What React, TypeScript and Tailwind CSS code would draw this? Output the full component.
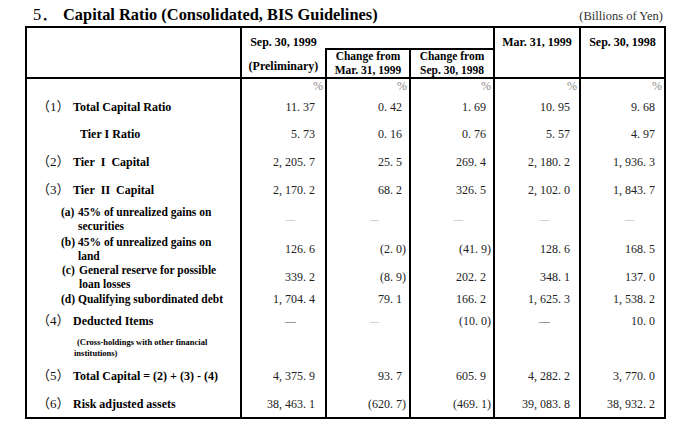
import React from "react";

type Val = { t: string; k: "num" | "paren" | "dash" | "dashDark" | "none" };

const n = (t: string): Val => ({ t, k: t.startsWith("(") ? "paren" : "num" });
const D: Val = { t: "—", k: "dash" };
const DD: Val = { t: "—", k: "dashDark" };

const colW = ["w-[85px]", "w-[84px]", "w-[84px]", "w-[86px]", "w-[85px]"];
const numPad = ["pr-[10px]", "pr-[7px]", "pr-[7px]", "pr-[9px]", "pr-[9px]"];
const parenPad = ["pr-[4px]", "pr-[3px]", "pr-[2px]", "pr-[4px]", "pr-[4px]"];

type Row = {
  h: string;
  prefix?: string;
  prefixKind?: "cjk" | "small";
  pl: string;
  lines: string[];
  vals: Val[];
  small?: boolean;
};

const rows: Row[] = [
  {
    h: "h-[27px]",
    prefix: "（1）",
    prefixKind: "cjk",
    pl: "pl-[10px]",
    lines: ["Total Capital Ratio"],
    vals: ["11. 37", "0. 42", "1. 69", "10. 95", "9. 68"].map(n),
  },
  {
    h: "h-[28px]",
    pl: "pl-[53px]",
    lines: ["Tier I Ratio"],
    vals: ["5. 73", "0. 16", "0. 76", "5. 57", "4. 97"].map(n),
  },
  {
    h: "h-[28px]",
    prefix: "（2）",
    prefixKind: "cjk",
    pl: "pl-[10px]",
    lines: ["Tier\u00a0\u00a0I\u00a0\u00a0Capital"],
    vals: ["2, 205. 7", "25. 5", "269. 4", "2, 180. 2", "1, 936. 3"].map(n),
  },
  {
    h: "h-[28px]",
    prefix: "（3）",
    prefixKind: "cjk",
    pl: "pl-[10px]",
    lines: ["Tier\u00a0\u00a0II\u00a0\u00a0Capital"],
    vals: ["2, 170. 2", "68. 2", "326. 5", "2, 102. 0", "1, 843. 7"].map(n),
  },
  {
    h: "h-[30px]",
    prefix: "(a)",
    prefixKind: "small",
    pl: "pl-[34px]",
    lines: ["45% of unrealized gains on", "securities"],
    vals: [D, D, D, D, D],
  },
  {
    h: "h-[29px]",
    prefix: "(b)",
    prefixKind: "small",
    pl: "pl-[34px]",
    lines: ["45% of unrealized gains on", "land"],
    vals: ["126. 6", "(2. 0)", "(41. 9)", "128. 6", "168. 5"].map(n),
  },
  {
    h: "h-[28px]",
    prefix: "(c)",
    prefixKind: "small",
    pl: "pl-[35px]",
    lines: ["General reserve for possible", "loan losses"],
    vals: ["339. 2", "(8. 9)", "202. 2", "348. 1", "137. 0"].map(n),
  },
  {
    h: "h-[16px]",
    prefix: "(d)",
    prefixKind: "small",
    pl: "pl-[34px]",
    lines: ["Qualifying subordinated debt"],
    vals: ["1, 704. 4", "79. 1", "166. 2", "1, 625. 3", "1, 538. 2"].map(n),
  },
  {
    h: "h-[28px]",
    prefix: "（4）",
    prefixKind: "cjk",
    pl: "pl-[10px]",
    lines: ["Deducted Items"],
    vals: [DD, D, n("(10. 0)"), DD, n("10. 0")],
  },
  {
    h: "h-[26px]",
    pl: "pl-[47px]",
    lines: ["(Cross-holdings with other financial", "institutions)"],
    small: true,
    vals: [
      { t: "", k: "none" },
      { t: "", k: "none" },
      { t: "", k: "none" },
      { t: "", k: "none" },
      { t: "", k: "none" },
    ],
  },
  {
    h: "h-[29px]",
    prefix: "（5）",
    prefixKind: "cjk",
    pl: "pl-[10px]",
    lines: ["Total Capital = (2) + (3) - (4)"],
    vals: ["4, 375. 9", "93. 7", "605. 9", "4, 282. 2", "3, 770. 0"].map(n),
  },
  {
    h: "h-[27px]",
    prefix: "（6）",
    prefixKind: "cjk",
    pl: "pl-[10px]",
    lines: ["Risk adjusted assets"],
    vals: ["38, 463. 1", "(620. 7)", "(469. 1)", "39, 083. 8", "38, 932. 2"].map(n),
  },
];

function ValCell({ v, i }: { v: Val; i: number }) {
  let pad = numPad[i];
  let cls = "text-[12px] text-[#222]";
  if (v.k === "paren") pad = parenPad[i];
  if (v.k === "dash") {
    pad = "pr-[30px]";
    cls = "text-[9px] text-[#b0b0b0]";
  }
  if (v.k === "dashDark") {
    pad = "pr-[29px]";
    cls = "text-[11px] text-[#444]";
  }
  return (
    <div
      className={`${colW[i]} border-l-2 border-black flex items-center justify-end ${pad}`}
    >
      <span className={`${cls} leading-[14px] whitespace-pre`}>{v.t}</span>
    </div>
  );
}

function LabelCell({ r }: { r: Row }) {
  if (r.small) {
    return (
      <div className={`w-[213px] flex items-center ${r.pl}`}>
        <div className="font-bold text-[8.5px] leading-[11px] text-black indent-[3px]">
          {r.lines[0]}
          <br />
          {r.lines[1]}
        </div>
      </div>
    );
  }
  return (
    <div className={`w-[213px] flex items-center ${r.pl}`}>
      <div className="flex items-start">
        {r.prefix && r.prefixKind === "cjk" && (
          <span className="w-[36px] shrink-0 text-[13px] leading-[14px] text-[#111]">
            {r.prefix}
          </span>
        )}
        {r.prefix && r.prefixKind === "small" && (
          <span className="w-[17px] shrink-0 font-bold text-[11.5px] leading-[14px] text-black">
            {r.prefix}
          </span>
        )}
        <div
          className={`font-bold ${
            r.prefixKind === "small" ? "text-[11.5px]" : "text-[12px]"
          } leading-[14px] text-black whitespace-pre`}
        >
          {r.lines.map((l, idx) => (
            <div key={idx}>{l}</div>
          ))}
        </div>
      </div>
    </div>
  );
}

export default function App() {
  return (
    <div className="w-[697px] h-[437px] bg-white pl-[25px] font-['Liberation_Serif','Noto_Sans_CJK_JP',serif] text-black">
      <div className="w-[641px] h-[26px] pt-[6px] flex items-baseline justify-between">
        <div className="pl-[8px] text-[16.4px] leading-[18px] font-bold whitespace-nowrap">
          <span className="inline-block w-[30px] font-normal">5．</span>
          Capital Ratio (Consolidated, BIS Guidelines)
        </div>
        <div className="pr-[3px] text-[12.5px] leading-[14px] text-[#333]">
          (Billions of Yen)
        </div>
      </div>

      <div className="w-[641px] border-2 border-black">
        {/* header */}
        <div className="flex h-[51px] border-b-2 border-black">
          <div className="w-[213px]" />
          <div className="w-[85px] border-l-2 border-black flex flex-col items-center font-bold text-[12px] leading-[14px] whitespace-nowrap">
            <div className="mt-[7px]">Sep. 30, 1999</div>
            <div className="mt-[10px]">(Preliminary)</div>
          </div>
          <div className="w-[168px] flex flex-col">
            <div className="h-[22px] border-b-2 border-black" />
            <div className="flex flex-1">
              <div className="w-[84px] border-l-2 border-black text-center font-bold text-[11.5px] leading-[13.5px] whitespace-nowrap">
                Change from
                <br />
                Mar. 31, 1999
              </div>
              <div className="w-[84px] border-l-2 border-black text-center font-bold text-[11.5px] leading-[13.5px] whitespace-nowrap">
                Change from
                <br />
                Sep. 30, 1998
              </div>
            </div>
          </div>
          <div className="w-[86px] border-l-2 border-black text-center font-bold text-[12px] leading-[14px] pt-[7px] whitespace-nowrap">
            Mar. 31, 1999
          </div>
          <div className="w-[85px] border-l-2 border-black text-center font-bold text-[12px] leading-[14px] pt-[7px] whitespace-nowrap">
            Sep. 30, 1998
          </div>
        </div>

        {/* percent row */}
        <div className="flex h-[14px]">
          <div className="w-[213px]" />
          {colW.map((w, i) => (
            <div
              key={i}
              className={`${w} border-l-2 border-black flex items-center justify-end pr-[2px]`}
            >
              <span className="text-[12px] leading-[12px] text-[#8a8a8a]">%</span>
            </div>
          ))}
        </div>

        {rows.map((r, ri) => (
          <div key={ri} className={`flex ${r.h}`}>
            <LabelCell r={r} />
            {r.vals.map((v, i) => (
              <ValCell key={i} v={v} i={i} />
            ))}
          </div>
        ))}
      </div>
    </div>
  );
}
